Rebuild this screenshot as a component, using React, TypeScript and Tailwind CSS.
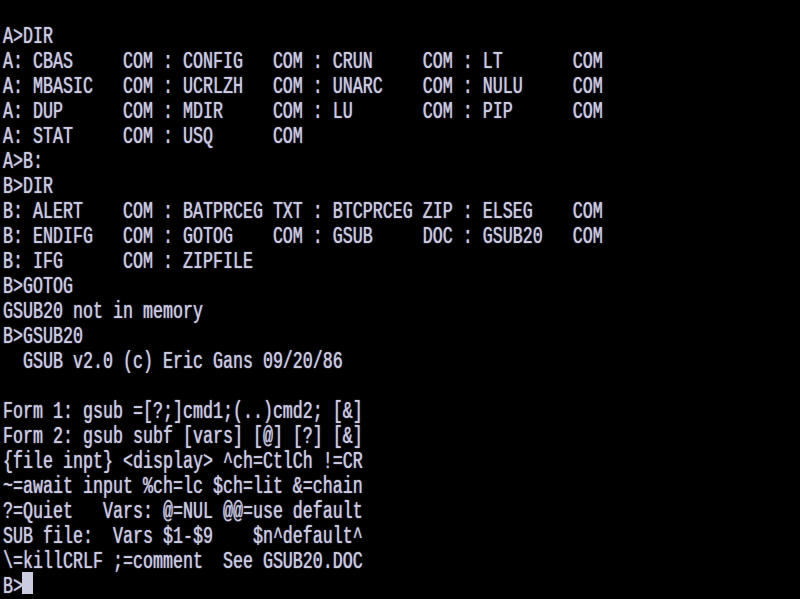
const lines = [
  "A>DIR",
  "A: CBAS     COM : CONFIG   COM : CRUN     COM : LT       COM",
  "A: MBASIC   COM : UCRLZH   COM : UNARC    COM : NULU     COM",
  "A: DUP      COM : MDIR     COM : LU       COM : PIP      COM",
  "A: STAT     COM : USQ      COM",
  "A>B:",
  "B>DIR",
  "B: ALERT    COM : BATPRCEG TXT : BTCPRCEG ZIP : ELSEG    COM",
  "B: ENDIFG   COM : GOTOG    COM : GSUB     DOC : GSUB20   COM",
  "B: IFG      COM : ZIPFILE",
  "B>GOTOG",
  "GSUB20 not in memory",
  "B>GSUB20",
  "  GSUB v2.0 (c) Eric Gans 09/20/86",
  "",
  "Form 1: gsub =[?;]cmd1;(..)cmd2; [&]",
  "Form 2: gsub subf [vars] [@] [?] [&]",
  "{file inpt} <display> ^ch=CtlCh !=CR",
  "~=await input %ch=lc $ch=lit &=chain",
  "?=Quiet   Vars: @=NUL @@=use default",
  "SUB file:  Vars $1-$9    $n^default^",
  "\\=killCRLF ;=comment  See GSUB20.DOC",
];

export default function App() {
  return (
    <div className="w-[800px] h-[599px] bg-black overflow-hidden pt-[26px] pl-[3px] font-['Liberation_Mono',monospace] text-[16.67px] leading-[25px] text-[#cbcbe2] [text-shadow:0_0_1px_#b8b8d8]">
      {lines.map((line, i) => (
        <div key={i} className="h-[25px] whitespace-pre origin-[0_17px] scale-y-[1.45]">
          {line}
        </div>
      ))}
      {/* prompt with block cursor */}
      <div className="h-[25px] flex items-start">
        <span className="whitespace-pre origin-[0_17px] scale-y-[1.45]">B&gt;</span>
        <span className="block w-[11px] h-[22px] -mt-[4px] -ml-[1px] bg-[#cbcbe2]" />
      </div>
    </div>
  );
}
